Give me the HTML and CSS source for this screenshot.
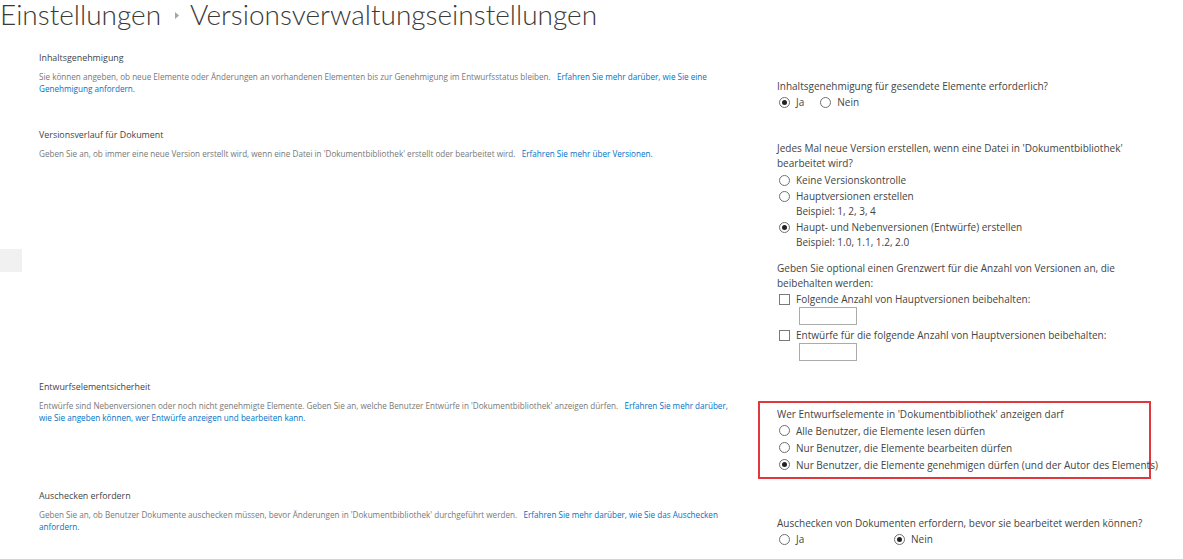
FILE: index.html
```html
<!DOCTYPE html>
<html lang="de">
<head>
<meta charset="utf-8">
<title>Versionsverwaltungseinstellungen</title>
<link rel="stylesheet" href="styles.css">
</head>
<body>
<div class="nav-remnant"></div>
<header class="title">
  <span class="crumb">Einstellungen</span>
  <svg class="crumb-arrow" width="4" height="7" viewBox="0 0 4 7"><path d="M0 0 L4 3.5 L0 7 Z" fill="#a6a6a6"/></svg>
  <span class="crumb">Versionsverwaltungseinstellungen</span>
</header>

<main class="sections">
  <section class="sec sec-1">
    <div class="info">
      <h2 class="sec-title">Inhaltsgenehmigung</h2>
      <p class="desc">Sie können angeben, ob neue Elemente oder Änderungen an vorhandenen Elementen bis zur Genehmigung im Entwurfsstatus bleiben.&nbsp;&nbsp; <a href="#">Erfahren Sie mehr darüber, wie Sie eine</a><br><a href="#">Genehmigung anfordern.</a></p>
    </div>
    <div class="ctrl ctrl-1">
      <p class="q">Inhaltsgenehmigung für gesendete Elemente erforderlich?</p>
      <div class="inline-opts">
        <label class="opt"><input type="radio" name="appr" checked><span>Ja</span></label>
        <label class="opt"><input type="radio" name="appr"><span>Nein</span></label>
      </div>
    </div>
  </section>

  <section class="sec sec-2">
    <div class="info">
      <h2 class="sec-title">Versionsverlauf für Dokument</h2>
      <p class="desc">Geben Sie an, ob immer eine neue Version erstellt wird, wenn eine Datei in 'Dokumentbibliothek' erstellt oder bearbeitet wird.&nbsp;&nbsp; <a href="#">Erfahren Sie mehr über Versionen.</a></p>
    </div>
    <div class="ctrl ctrl-2">
      <p class="q">Jedes Mal neue Version erstellen, wenn eine Datei in 'Dokumentbibliothek'<br>bearbeitet wird?</p>
      <label class="opt opt-first"><input type="radio" name="ver"><span>Keine Versionskontrolle</span></label>
      <label class="opt"><input type="radio" name="ver"><span>Hauptversionen erstellen</span></label>
      <p class="sub">Beispiel: 1, 2, 3, 4</p>
      <label class="opt"><input type="radio" name="ver" checked><span>Haupt- und Nebenversionen (Entwürfe) erstellen</span></label>
      <p class="sub">Beispiel: 1.0, 1.1, 1.2, 2.0</p>
      <p class="q q-limit">Geben Sie optional einen Grenzwert für die Anzahl von Versionen an, die<br>beibehalten werden:</p>
      <label class="opt"><input type="checkbox"><span>Folgende Anzahl von Hauptversionen beibehalten:</span></label>
      <input class="num" type="text">
      <label class="opt opt-gap"><input type="checkbox"><span>Entwürfe für die folgende Anzahl von Hauptversionen beibehalten:</span></label>
      <input class="num" type="text">
    </div>
  </section>

  <section class="sec sec-3">
    <div class="info">
      <h2 class="sec-title">Entwurfselementsicherheit</h2>
      <p class="desc">Entwürfe sind Nebenversionen oder noch nicht genehmigte Elemente. Geben Sie an, welche Benutzer Entwürfe in 'Dokumentbibliothek' anzeigen dürfen.&nbsp;&nbsp; <a href="#">Erfahren Sie mehr darüber,</a><br><a href="#">wie Sie angeben können, wer Entwürfe anzeigen und bearbeiten kann.</a></p>
    </div>
    <div class="ctrl ctrl-3">
      <div class="highlight">
        <p class="q">Wer Entwurfselemente in 'Dokumentbibliothek' anzeigen darf</p>
        <label class="opt opt-tall"><input type="radio" name="draft"><span>Alle Benutzer, die Elemente lesen dürfen</span></label>
        <label class="opt opt-tall"><input type="radio" name="draft"><span>Nur Benutzer, die Elemente bearbeiten dürfen</span></label>
        <label class="opt opt-tall"><input type="radio" name="draft" checked><span>Nur Benutzer, die Elemente genehmigen dürfen (und der Autor des Elements)</span></label>
      </div>
    </div>
  </section>

  <section class="sec sec-4">
    <div class="info">
      <h2 class="sec-title">Auschecken erfordern</h2>
      <p class="desc">Geben Sie an, ob Benutzer Dokumente auschecken müssen, bevor Änderungen in 'Dokumentbibliothek' durchgeführt werden.&nbsp;&nbsp; <a href="#">Erfahren Sie mehr darüber, wie Sie das Auschecken</a><br><a href="#">anfordern.</a></p>
    </div>
    <div class="ctrl ctrl-4">
      <p class="q">Auschecken von Dokumenten erfordern, bevor sie bearbeitet werden können?</p>
      <div class="inline-opts wide">
        <label class="opt"><input type="radio" name="co"><span>Ja</span></label>
        <label class="opt"><input type="radio" name="co" checked><span>Nein</span></label>
      </div>
    </div>
  </section>
</main>
</body>
</html>
```

FILE: styles.css
```css
html, body {
  margin: 0;
  padding: 0;
  background: #ffffff;
}

body {
  font-family: "Open Sans", "Noto Sans", sans-serif;
  color: #444444;
  position: relative;
  overflow: hidden;
}

.nav-remnant {
  position: absolute;
  left: 0;
  top: 249px;
  width: 22px;
  height: 23px;
  background: #f1f1f1;
}

/* Title */
.title {
  display: flex;
  align-items: flex-start;
  height: 30px;
  margin: 0;
  font-family: "Lato", "Open Sans", sans-serif;
  font-weight: 300;
  font-size: 28px;
  line-height: 28px;
  color: #3a3a3a;
  white-space: nowrap;
}

.crumb-arrow {
  flex: none;
  margin: 12px 11px 0 14px;
}

/* Sections */
.sections {
  padding-top: 21px;
}

.sec {
  display: grid;
  grid-template-columns: 738px 1fr;
  padding-left: 39px;
}

.sec-1 { margin-bottom: 18px; }
.sec-2 { margin-bottom: 19px; }
.sec-3 { margin-bottom: 10px; }

.info {
  width: 690px;
}

.sec-title {
  margin: 0 0 6px;
  font-size: 8.9px;
  font-weight: 400;
  line-height: 14px;
  color: #444444;
  white-space: nowrap;
}

.desc {
  margin: 0;
  font-size: 8.15px;
  line-height: 11.5px;
  color: #787878;
  white-space: nowrap;
}

.desc a {
  color: #0072c6;
  text-decoration: none;
}

/* Controls column */
.ctrl {
  font-size: 10px;
  color: #444444;
  white-space: nowrap;
}

.ctrl-1 { padding-top: 28px; }
.ctrl-2 { padding-top: 13px; }
.ctrl-3 { padding-top: 21px; }
.ctrl-4 { padding-top: 27px; }

.q {
  margin: 0;
  line-height: 15px;
}

.q-limit {
  margin-top: 11px;
}

.sub {
  margin: 0;
  padding-left: 19px;
  line-height: 15px;
}

.opt {
  display: flex;
  align-items: center;
  height: 16px;
}

.opt-first {
  margin-top: 1px;
}

.opt-tall {
  height: 17px;
}

.opt-gap {
  margin-top: 2px;
}

.opt span {
  line-height: 16px;
}

.inline-opts {
  display: flex;
}

.inline-opts .opt {
  margin-right: 14px;
}

.inline-opts.wide .opt:first-child {
  width: 115px;
  margin-right: 0;
}

input[type="radio"],
input[type="checkbox"] {
  appearance: none;
  -webkit-appearance: none;
  margin: 0 6px 0 2px;
  width: 11px;
  height: 11px;
  border: 1px solid #6f6f6f;
  background: #ffffff;
  box-sizing: border-box;
  flex: none;
}

input[type="radio"] {
  border-radius: 50%;
  position: relative;
}

input[type="radio"]:checked::after {
  content: "";
  position: absolute;
  left: 2px;
  top: 2px;
  width: 5px;
  height: 5px;
  border-radius: 50%;
  background: #222222;
}

input[type="checkbox"] {
  border-color: #7a7a7a;
}

.num {
  display: block;
  margin: 0 0 0 22px;
  width: 58px;
  height: 18px;
  box-sizing: border-box;
  border: 1px solid #ababab;
  padding: 0;
  font: inherit;
}

/* Highlighted block */
.highlight {
  margin-left: -19px;
  width: 393px;
  box-sizing: border-box;
  height: 78px;
  padding: 5px 0 0 17px;
  border: 2px solid #e0383c;
}

.highlight .q {
  line-height: 13px;
  margin-bottom: 1px;
}
```
